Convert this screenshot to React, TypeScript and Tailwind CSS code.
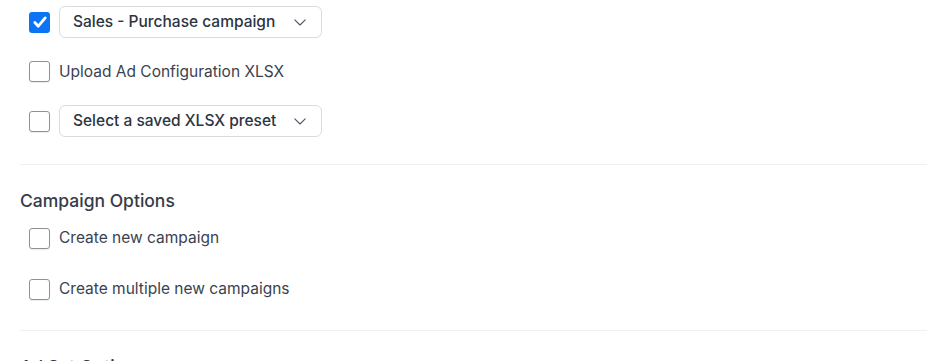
import React from "react";

function Checkbox({ checked }: { checked?: boolean }) {
  if (checked) {
    return (
      <div className="w-[21px] h-[21px] shrink-0 rounded-[3px] bg-[#0b74f4] flex items-center justify-center">
        <svg width="16" height="16" viewBox="0 0 16 16" fill="none">
          <path d="M2.8 8.6 L6.3 12.2 L13.2 3.9" stroke="white" strokeWidth="2.8" strokeLinecap="round" strokeLinejoin="round" />
        </svg>
      </div>
    );
  }
  return (
    <div className="w-[21px] h-[21px] shrink-0 rounded-[3px] border border-[#8f9196] bg-white shadow-[0_1px_1px_rgba(0,0,0,0.08)]" />
  );
}

function Select({ label }: { label: string }) {
  return (
    <div className="h-8 w-[263px] rounded-[6px] border border-[#d9dbe0] bg-white flex items-center justify-between pl-[13px] pr-[15px]">
      <span className="text-[15.5px] font-medium text-[#2b3442]">{label}</span>
      <svg width="12" height="7" viewBox="0 0 12 7" fill="none">
        <path d="M0.8 0.8 L6 6 L11.2 0.8" stroke="#4b5563" strokeWidth="1.1" strokeLinecap="round" strokeLinejoin="round" />
      </svg>
    </div>
  );
}

function Row({ children }: { children: React.ReactNode }) {
  return <div className="h-8 flex items-center gap-[9px]">{children}</div>;
}

function Label({ text }: { text: string }) {
  return <span className="text-[15.5px] text-[#3a4250]">{text}</span>;
}

export default function App() {
  return (
    <div className="w-[927px] h-[361px] overflow-hidden bg-white pl-5" style={{ fontFamily: "Inter, 'Noto Sans', sans-serif" }}>
      <div className="pl-[9px] pt-[6px] flex flex-col gap-[17.5px]">
        <Row>
          <Checkbox checked />
          <Select label="Sales - Purchase campaign" />
        </Row>
        <Row>
          <Checkbox />
          <Label text="Upload Ad Configuration XLSX" />
        </Row>
        <Row>
          <Checkbox />
          <Select label="Select a saved XLSX preset" />
        </Row>
      </div>
      <div className="mt-[27px] h-px bg-[#eef0f2]" />
      <div className="pt-6">
        <h3 className="text-[17.5px] leading-6 font-medium text-[#353c48]">Campaign Options</h3>
        <div className="pl-[9px] mt-[9px] flex flex-col gap-[19px]">
          <Row>
            <Checkbox />
            <Label text="Create new campaign" />
          </Row>
          <Row>
            <Checkbox />
            <Label text="Create multiple new campaigns" />
          </Row>
        </div>
      </div>
      <div className="mt-[25px] h-px bg-[#eef0f2]" />
      <div className="pt-6">
        <h3 className="text-[17.5px] leading-6 font-medium text-[#353c48]">Ad Set Options</h3>
      </div>
    </div>
  );
}
